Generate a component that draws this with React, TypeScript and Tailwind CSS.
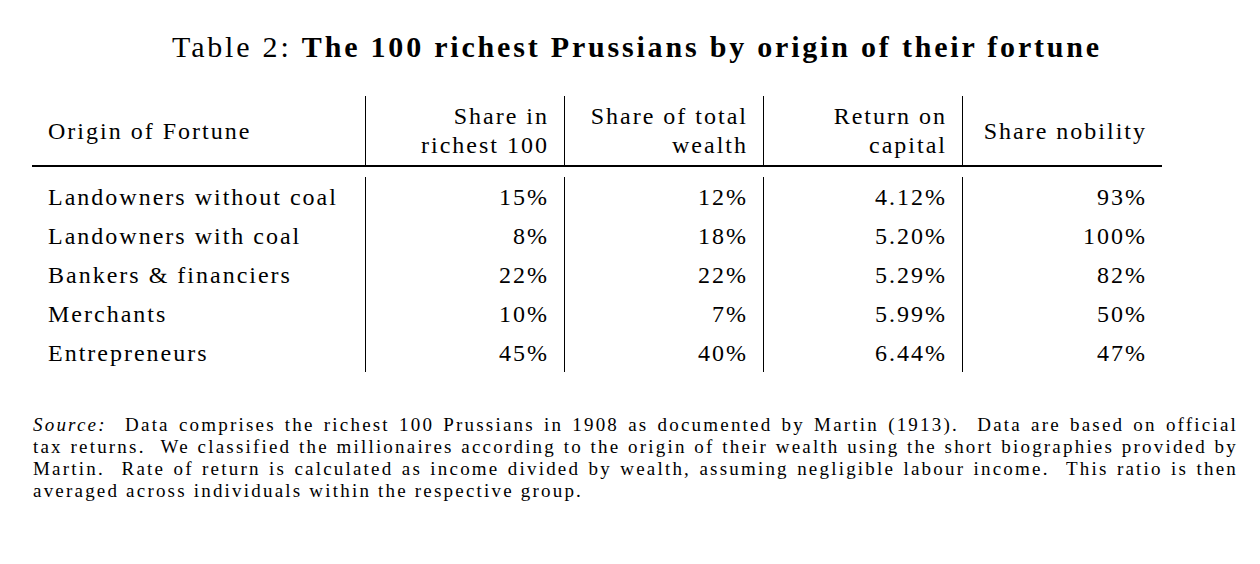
import React from "react";

const rows = [
  ["Landowners without coal", "15%", "12%", "4.12%", "93%"],
  ["Landowners with coal", "8%", "18%", "5.20%", "100%"],
  ["Bankers & financiers", "22%", "22%", "5.29%", "82%"],
  ["Merchants", "10%", "7%", "5.99%", "50%"],
  ["Entrepreneurs", "45%", "40%", "6.44%", "47%"],
];

const noteLines = [
  "Data comprises the richest 100 Prussians in 1908 as documented by Martin (1913).  Data are based on official",
  "tax returns.  We classified the millionaires according to the origin of their wealth using the short biographies provided by",
  "Martin.  Rate of return is calculated as income divided by wealth, assuming negligible labour income.  This ratio is then",
  "averaged across individuals within the respective group.",
];

export default function App() {
  return (
    <div
      className="w-[1260px] h-[564px] bg-white text-black overflow-hidden"
      style={{ fontFamily: '"Liberation Serif", "Times New Roman", serif' }}
    >
      <div className="pt-[30px] pl-[14px] flex justify-center text-[30px] leading-[34px] tracking-[2.8px]">
        <span>
          Table 2: <b>The 100 richest Prussians by origin of their fortune</b>
        </span>
      </div>

      <div className="ml-[32px] mt-[32px] w-[1130px] text-[24px] tracking-[2px]">
        <div className="grid grid-cols-[334px_199px_199px_199px_199px] h-[69px]">
          <div className="flex items-center pl-[16px] border-r border-black">Origin of Fortune</div>
          <div className="flex flex-col justify-center items-end pr-[15px] leading-[29px] border-r border-black text-right">
            <span>Share in</span>
            <span>richest 100</span>
          </div>
          <div className="flex flex-col justify-center items-end pr-[15px] leading-[29px] border-r border-black text-right">
            <span>Share of total</span>
            <span>wealth</span>
          </div>
          <div className="flex flex-col justify-center items-end pr-[15px] leading-[29px] border-r border-black text-right">
            <span>Return on</span>
            <span>capital</span>
          </div>
          <div className="flex items-center justify-end pr-[15px]">Share nobility</div>
        </div>
        <div className="h-[2px] bg-black" />
        <div className="grid grid-cols-[334px_199px_199px_199px_199px] mt-[10px]">
          {[0, 1, 2, 3, 4].map((c) => (
            <div
              key={c}
              className={
                c === 0
                  ? "flex flex-col pl-[16px] border-r border-black"
                  : c === 4
                  ? "flex flex-col items-end pr-[15px]"
                  : "flex flex-col items-end pr-[15px] border-r border-black"
              }
            >
              {rows.map((r, i) => (
                <div key={i} className="h-[39px] flex items-center">
                  {r[c]}
                </div>
              ))}
            </div>
          ))}
        </div>
      </div>

      <div className="ml-[33px] w-[1205px] mt-[42px] text-[19px] leading-[22px] tracking-[2.2px]">
        {noteLines.map((l, i) => (
          <div
            key={i}
            className={i < 3 ? "text-justify [text-align-last:justify] whitespace-pre-wrap" : "whitespace-pre-wrap"}
          >
            {i === 0 ? <i>Source:</i> : null}
            {i === 0 ? "  " : null}
            {l}
          </div>
        ))}
      </div>
    </div>
  );
}
